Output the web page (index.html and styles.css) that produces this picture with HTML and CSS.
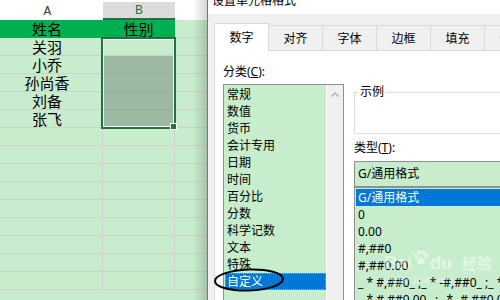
FILE: index.html
```html
<!DOCTYPE html>
<html lang="zh-CN">
<head>
  <meta charset="UTF-8" />
  <title>设置单元格格式</title>
  <link rel="stylesheet" href="styles.css">
</head>
<body>
  <div class="screen">
    <div class="sheet">
      <div class="row head"><div class="cell col-a">A</div><div class="cell col-b">B</div><div class="cell col-c"></div></div>
      <div class="row title-row"><div class="cell col-a">姓名</div><div class="cell col-b">性别</div><div class="cell col-c"></div></div>
      <div class="row"><div class="cell col-a">关羽</div><div class="cell col-b"></div><div class="cell col-c"></div></div>
      <div class="row"><div class="cell col-a">小乔</div><div class="cell col-b sel"></div><div class="cell col-c"></div></div>
      <div class="row"><div class="cell col-a">孙尚香</div><div class="cell col-b sel"></div><div class="cell col-c"></div></div>
      <div class="row"><div class="cell col-a">刘备</div><div class="cell col-b sel"></div><div class="cell col-c"></div></div>
      <div class="row"><div class="cell col-a">张飞</div><div class="cell col-b sel"></div><div class="cell col-c"></div></div>
      <div class="row"><div class="cell col-a"></div><div class="cell col-b"></div><div class="cell col-c"></div></div>
      <div class="row"><div class="cell col-a"></div><div class="cell col-b"></div><div class="cell col-c"></div></div>
      <div class="row"><div class="cell col-a"></div><div class="cell col-b"></div><div class="cell col-c"></div></div>
      <div class="row"><div class="cell col-a"></div><div class="cell col-b"></div><div class="cell col-c"></div></div>
      <div class="row"><div class="cell col-a"></div><div class="cell col-b"></div><div class="cell col-c"></div></div>
      <div class="row"><div class="cell col-a"></div><div class="cell col-b"></div><div class="cell col-c"></div></div>
      <div class="row"><div class="cell col-a"></div><div class="cell col-b"></div><div class="cell col-c"></div></div>
      <div class="row"><div class="cell col-a"></div><div class="cell col-b"></div><div class="cell col-c"></div></div>
      <div class="row"><div class="cell col-a"></div><div class="cell col-b"></div><div class="cell col-c"></div></div>
      <div class="selection"></div>
      <div class="fill-handle"></div>
      <div class="shade"></div>
    </div>

    <div class="dialog">
      <div class="titlebar"><span>设置单元格格式</span></div>
      <div class="tabs">
        <div class="tab on">数字</div>
        <div class="tab">对齐</div>
        <div class="tab">字体</div>
        <div class="tab">边框</div>
        <div class="tab">填充</div>
        <div class="tab">保护</div>
      </div>
      <div class="panel">
        <div class="left">
          <div class="label">分类(<u>C</u>):</div>
          <div class="listbox">
            <div class="items">
              <div class="item">常规</div>
              <div class="item">数值</div>
              <div class="item">货币</div>
              <div class="item">会计专用</div>
              <div class="item">日期</div>
              <div class="item">时间</div>
              <div class="item">百分比</div>
              <div class="item">分数</div>
              <div class="item">科学记数</div>
              <div class="item">文本</div>
              <div class="item">特殊</div>
              <div class="item on">自定义</div>
            </div>
            <div class="scrollbar">
              <svg width="8" height="5" viewBox="0 0 8 5"><path d="M0.5 4.5 L4 1 L7.5 4.5" fill="none" stroke="#a6a6a6" stroke-width="1.2"/></svg>
            </div>
          </div>
        </div>
        <div class="right">
          <fieldset class="sample"><legend>示例</legend></fieldset>
          <div class="label type-label">类型(<u>T</u>):</div>
          <div class="textbox">G/通用格式</div>
          <div class="typelist">
            <div class="item on">G/通用格式</div>
            <div class="item">0</div>
            <div class="item">0.00</div>
            <div class="item">#,##0</div>
            <div class="item">#,##0.00</div>
            <div class="item">_ * #,##0_ ;_ * -#,##0_ ;_ * "-"_ ;_ @_ </div>
            <div class="item">_ * #,##0.00_ ;_ * -#,##0.00_ ;_ * "-"??_ ;_ @_ </div>
          </div>
        </div>
      </div>
    </div>

    <svg class="ring" width="74" height="30" viewBox="0 0 74 30"><ellipse cx="37" cy="15" rx="34" ry="10.5" fill="none" stroke="#000" stroke-width="2" transform="rotate(-2 37 15)"/></svg>

    <div class="watermark">
      <div class="wm-main">
        <span>Bai</span>
        <svg class="paw" width="16" height="15" viewBox="0 0 16 15"><ellipse cx="3" cy="6" rx="2" ry="2.6"/><ellipse cx="6.3" cy="2.6" rx="2" ry="2.4"/><ellipse cx="10.3" cy="2.6" rx="2" ry="2.4"/><ellipse cx="13.4" cy="6" rx="2" ry="2.6"/><path d="M8 7 C5 7 3.5 11 4.5 13 C5.5 14.5 10.5 14.5 11.5 13 C12.5 11 11 7 8 7 Z"/></svg>
        <span>du</span>
        <span class="wm-cn">经验</span>
      </div>
      <div class="wm-url">jingyan.baidu.com</div>
    </div>
  </div>
</body>
</html>
```

FILE: styles.css
```css
* { box-sizing: border-box; }
html, body { margin: 0; padding: 0; }
body { width: 500px; height: 300px; overflow: hidden; background: #fff; color: #000; font-family: "Noto Sans", "Noto Sans CJK SC", sans-serif; font-size: 12px; }
.screen { display: flex; width: 500px; height: 300px; position: relative; overflow: hidden; }

/* spreadsheet */
.sheet { width: 207px; flex: none; position: relative; background: #c7edcc; font-family: "Noto Sans CJK SC", sans-serif; }
.row { display: flex; height: 18px; }
.cell { height: 100%; display: flex; justify-content: center; align-items: flex-end; border-right: 1px solid #d0d0d0; border-bottom: 1px solid #d0d0d0; font-size: 15px; line-height: 17px; }
.col-a { width: 103px; padding-right: 8px; }
.col-b { width: 72px; }
.col-c { width: 32px; border-right: none; }
.head { height: 20px; padding-top: 2px; background: #fff; }
.head .cell { border: none; align-items: center; font-family: "Liberation Mono", monospace; font-size: 13px; color: #444; }
.head .col-b { background: #dcdcdc; border-bottom: 2px solid #217346; color: #217346; }
.title-row .col-a, .title-row .col-b { background: #00b050; border-color: #00b050; }
.sel { background: #9eb9a2; border-bottom-color: #93ac97; }
.selection { position: absolute; left: 101px; top: 37px; width: 75px; height: 92px; border: 2px solid #217346; box-shadow: inset 0 0 0 1px #fff; }
.fill-handle { position: absolute; left: 170px; top: 123px; width: 7px; height: 7px; background: #217346; border: 1px solid #fff; }
.shade { position: absolute; top: 0; right: 0; width: 14px; height: 100%; background: linear-gradient(to right, rgba(0,0,0,0), rgba(0,0,0,.17)); }

/* dialog */
.dialog { flex: 1; position: relative; overflow: hidden; background: #f0f0f0; border-left: 1px solid #2b87d8; }
.titlebar { height: 14px; padding-left: 4px; background: #fff; overflow: hidden; }
.titlebar span { display: block; margin-top: -8px; line-height: 16px; white-space: nowrap; font-family: "Noto Sans CJK SC", sans-serif; }
.tabs { display: flex; align-items: flex-end; height: 27px; margin-top: 9px; padding-left: 6px; position: relative; z-index: 1; }
.tab { flex: none; width: 55px; height: 25px; margin-left: -1px; border: 1px solid #d9d9d9; border-bottom: none; background: #f0f0f0; text-align: center; line-height: 24px; font-family: "Noto Sans CJK SC", sans-serif; }
.tab:first-child { margin-left: 0; }
.tab.on { height: 28px; margin-bottom: -1px; background: #fff; line-height: 26px; position: relative; z-index: 1; }
.panel { display: flex; gap: 10px; width: 330px; height: 260px; margin-left: 6px; padding: 13px 0 0 8px; background: #fff; border: 1px solid #d9d9d9; }
.label { line-height: 16px; white-space: nowrap; }

.listbox { display: flex; width: 121px; height: 230px; margin-top: 4px; padding: 1px 0 0 1px; border: 1px solid #8f8f8f; background: #c7edcc; }
.items { flex: 1; }
.item { height: 17px; line-height: 17px; padding-left: 2px; white-space: pre; overflow: hidden; }
.item.on { background: #0078d7; color: #fff; }
.listbox .item.on { outline: 1px dotted #f0a030; outline-offset: -1px; }
.scrollbar { width: 17px; margin-top: -1px; padding-top: 7px; text-align: center; background: #f0f0f0; border-left: 1px solid #fff; }
.scrollbar svg { display: block; margin: 0 auto; }

.right { width: 200px; }
.sample { height: 50px; margin: 20px 0 0; padding: 0; border: 1px solid #dcdcdc; }
.sample legend { margin-left: 4px; padding: 0 1px; line-height: 16px; }
.type-label { margin-top: 6px; }
.textbox { height: 26px; margin-top: 5px; padding-left: 3px; line-height: 24px; border: 1px solid #8f8f8f; background: #c7edcc; white-space: nowrap; }
.typelist { height: 140px; padding: 1px; border: 1px solid #8f8f8f; background: #c7edcc; }

.ring { position: absolute; left: 212px; top: 265px; }

.watermark { position: absolute; left: 384px; top: 250px; width: 116px; color: rgba(255,255,255,.5); pointer-events: none; }
.wm-main { display: flex; align-items: flex-end; white-space: nowrap; font-family: "Liberation Sans", sans-serif; font-weight: bold; font-size: 18px; line-height: 20px; }
.wm-main > * { flex: none; }
.paw { fill: rgba(255,255,255,.5); margin: 0 1px 8px; }
.wm-cn { margin-left: 10px; font-family: "Noto Sans CJK SC", sans-serif; font-size: 15px; }
.wm-url { font-size: 8px; line-height: 10px; margin-top: 2px; white-space: nowrap; }
```
